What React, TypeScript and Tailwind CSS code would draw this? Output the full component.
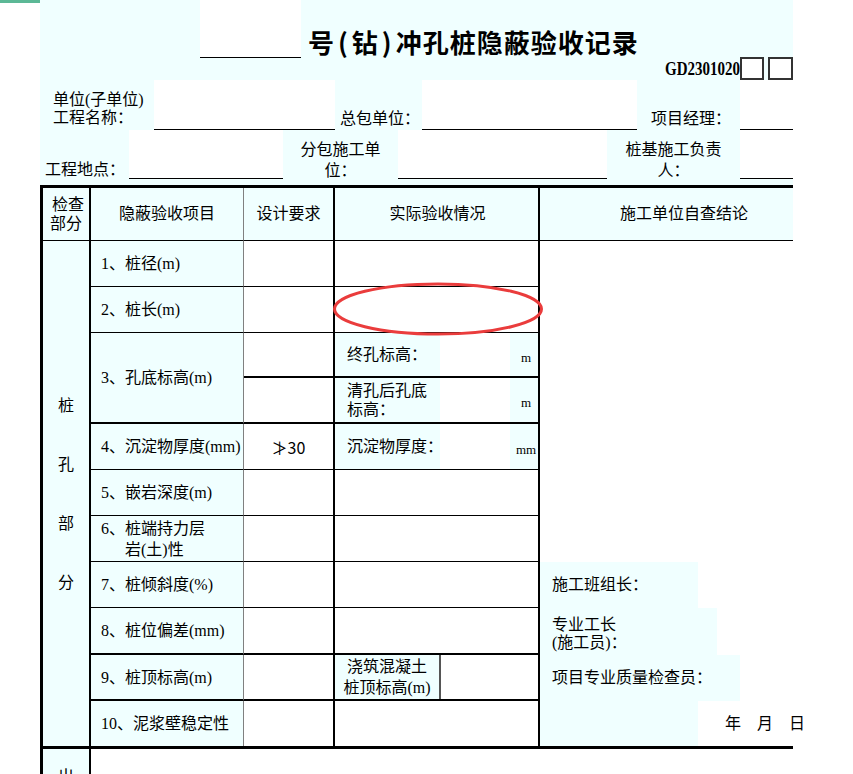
import React from "react";

const CY = "bg-[#f0ffff]";
const LB = "border-b border-b-black";
const LB2 = "border-b-2 border-b-black";
const RA = "border-r-2 border-r-black";
const RB = "border-r border-r-[#808080]";

function BCell({ row, span, bottom, children }: { row: string; span?: string; bottom: string; children: React.ReactNode }) {
  return (
    <div className={`col-start-2 ${row} ${span ?? ""} ${RB} ${bottom} ${CY} flex items-center pl-[10px] leading-[21px] whitespace-nowrap`}>
      {children}
    </div>
  );
}

function Unit({ u, label, lines }: { u: string; label?: string; lines?: string[] }) {
  return (
    <div className="flex h-full">
      <div className={`w-[105px] shrink-0 ${CY} flex flex-col justify-center pl-[12px] leading-[19px] whitespace-nowrap`}>
        {label ? <span>{label}</span> : lines?.map((l) => <span key={l}>{l}</span>)}
      </div>
      <div className="w-[70px] shrink-0 bg-white" />
      <div className={`flex-1 ${CY} flex items-center justify-center pl-[4px] pt-[5px] font-['Liberation_Serif',serif] text-[13px] leading-[13px]`}>
        {u}
      </div>
    </div>
  );
}

export default function App() {
  return (
    <div className="relative w-[853px] h-[774px] overflow-hidden bg-white font-['Liberation_Serif','Noto_Sans_CJK_SC',serif] text-[16px] text-black">
      <div className="flex">
        <div className="w-[40px] shrink-0">
          <div className="h-[3px] w-[40px] bg-[#5cb896]" />
        </div>
        <div className={`w-[753px] shrink-0 flex flex-col ${CY}`}>
          {/* title row */}
          <div className="h-[80px] flex">
            <div className="w-[160px] shrink-0" />
            <div className="w-[101px] h-[58px] shrink-0 bg-white border-b border-b-black" />
            <div className="ml-[7px] mt-[29px] font-['Noto_Sans_CJK_SC',sans-serif] text-[26px] leading-[26px] font-bold tracking-[1px] whitespace-nowrap">
              号<span className="mx-[3px]">(</span>钻<span className="mx-[3px]">)</span>冲孔桩隐蔽验收记录
            </div>
            <div className="flex-1" />
            <div className="self-end flex items-center h-[23px]">
              <span className="inline-block font-['Liberation_Serif',serif] font-bold text-[15px] leading-[15px] scale-y-[1.3] mt-[1px]">
                GD2301020
              </span>
              <div className="w-[24px] h-[23px] border-2 border-[#333] bg-white" />
              <div className="ml-[4px] w-[25px] h-[23px] border-2 border-[#333] bg-white" />
            </div>
          </div>

          {/* info row 1 */}
          <div className="h-[50px] flex">
            <div className="w-[114px] shrink-0 pl-[13px] pt-[11px] leading-[18px] flex flex-col whitespace-nowrap">
              <span>单位(子单位)</span>
              <span>工程名称：</span>
            </div>
            <div className="w-[181px] shrink-0 bg-white border-b border-b-black" />
            <div className="w-[87px] shrink-0 pl-[5px] pt-[29px] leading-[20px] whitespace-nowrap">总包单位：</div>
            <div className="w-[215px] shrink-0 bg-white border-b border-b-black" />
            <div className="w-[103px] shrink-0 pl-[14px] pt-[29px] leading-[20px] whitespace-nowrap">项目经理：</div>
            <div className="w-[53px] shrink-0 bg-white border-b border-b-black" />
          </div>

          {/* info row 2 */}
          <div className="h-[50px] flex items-start">
            <div className="w-[89px] shrink-0 pl-[5px] pt-[30px] leading-[20px] whitespace-nowrap">工程地点：</div>
            <div className="w-[154px] shrink-0 h-[49px] bg-white border-b border-b-black" />
            <div className="w-[115px] shrink-0 pt-[9px] leading-[21px] flex flex-col items-center whitespace-nowrap">
              <span>分包施工单</span>
              <span>位：</span>
            </div>
            <div className="w-[209px] shrink-0 h-[49px] bg-white border-b border-b-black" />
            <div className="w-[133px] shrink-0 pt-[9px] leading-[21px] flex flex-col items-center whitespace-nowrap">
              <span>桩基施工负责</span>
              <span>人：</span>
            </div>
            <div className="w-[53px] shrink-0 h-[49px] bg-white border-b border-b-black" />
          </div>

          {/* table */}
          <div className="mt-[5px] border-l-[3px] border-t-[3px] border-black">
            <div className="grid grid-cols-[48px_153px_91px_205px_253px] grid-rows-[53px_46px_46px_45px_46px_46px_46px_46px_46px_47px_46px_45px] border-b-[3px] border-b-black">
              {/* header */}
              <div className={`col-start-1 row-start-1 ${RA} ${LB} flex flex-col items-center justify-center leading-[19px]`}>
                <span className="pl-[4px]">检查</span>
                <span>部分</span>
              </div>
              <div className={`col-start-2 row-start-1 ${RB} ${LB} flex items-center justify-center`}>隐蔽验收项目</div>
              <div className={`col-start-3 row-start-1 ${RA} ${LB} flex items-center justify-center`}>设计要求</div>
              <div className={`col-start-4 row-start-1 ${RA} ${LB} flex items-center justify-center pl-[2px]`}>实际验收情况</div>
              <div className={`col-start-5 row-start-1 ${LB} flex items-center justify-center pl-[35px] whitespace-nowrap`}>施工单位自查结论</div>

              {/* col A */}
              <div className={`col-start-1 row-start-2 row-span-11 ${RA} flex flex-col items-center justify-center leading-[59px]`}>
                <span>桩</span>
                <span>孔</span>
                <span>部</span>
                <span>分</span>
              </div>

              {/* col B */}
              <BCell row="row-start-2" bottom={LB}>1、桩径(m)</BCell>
              <BCell row="row-start-3" bottom={LB}>2、桩长(m)</BCell>
              <BCell row="row-start-4" span="row-span-2" bottom={LB2}>3、孔底标高(m)</BCell>
              <BCell row="row-start-6" bottom={LB}>4、沉淀物厚度(mm)</BCell>
              <BCell row="row-start-7" bottom={LB}>5、嵌岩深度(m)</BCell>
              <BCell row="row-start-8" bottom={LB}>
                <div className="flex flex-col">
                  <span>6、桩端持力层</span>
                  <span className="pl-[24px]">岩(土)性</span>
                </div>
              </BCell>
              <BCell row="row-start-9" bottom={LB}>7、桩倾斜度(%)</BCell>
              <BCell row="row-start-10" bottom={LB2}>8、桩位偏差(mm)</BCell>
              <BCell row="row-start-11" bottom={LB2}>9、桩顶标高(m)</BCell>
              <BCell row="row-start-12" bottom="">10、泥浆壁稳定性</BCell>

              {/* col C */}
              <div className={`col-start-3 row-start-2 ${RA} ${LB} bg-white`} />
              <div className={`col-start-3 row-start-3 ${RA} ${LB} bg-white`} />
              <div className={`col-start-3 row-start-4 ${RA} ${LB2} bg-white`} />
              <div className={`col-start-3 row-start-5 ${RA} ${LB2} bg-white`} />
              <div className={`col-start-3 row-start-6 ${RA} ${LB} bg-white flex items-center justify-center font-['Noto_Sans_CJK_SC',sans-serif]`}>≯30</div>
              <div className={`col-start-3 row-start-7 ${RA} ${LB} bg-white`} />
              <div className={`col-start-3 row-start-8 ${RA} ${LB} bg-white`} />
              <div className={`col-start-3 row-start-9 ${RA} ${LB} bg-white`} />
              <div className={`col-start-3 row-start-10 ${RA} ${LB2} bg-white`} />
              <div className={`col-start-3 row-start-11 ${RA} ${LB2} bg-white`} />
              <div className={`col-start-3 row-start-12 ${RA} bg-white`} />

              {/* col D */}
              <div className={`col-start-4 row-start-2 ${RA} ${LB} bg-white`} />
              <div className={`col-start-4 row-start-3 ${RA} ${LB} bg-white`} />
              <div className={`col-start-4 row-start-4 ${RA} ${LB2} bg-white`}>
                <Unit u="m" label="终孔标高：" />
              </div>
              <div className={`col-start-4 row-start-5 ${RA} ${LB2} bg-white`}>
                <Unit u="m" lines={["清孔后孔底", "标高："]} />
              </div>
              <div className={`col-start-4 row-start-6 ${RA} ${LB} bg-white`}>
                <Unit u="mm" label="沉淀物厚度：" />
              </div>
              <div className={`col-start-4 row-start-7 ${RA} ${LB} bg-white`} />
              <div className={`col-start-4 row-start-8 ${RA} ${LB} bg-white`} />
              <div className={`col-start-4 row-start-9 ${RA} ${LB} bg-white`} />
              <div className={`col-start-4 row-start-10 ${RA} ${LB2} bg-white`} />
              <div className={`col-start-4 row-start-11 ${RA} ${LB2} bg-white flex`}>
                <div className={`w-[106px] shrink-0 ${CY} border-r-2 border-r-[#555] flex flex-col items-center justify-center leading-[21px] whitespace-nowrap`}>
                  <span>浇筑混凝土</span>
                  <span>桩顶标高(m)</span>
                </div>
              </div>
              <div className={`col-start-4 row-start-12 ${RA} bg-white`} />

              {/* col E */}
              <div className="col-start-5 row-start-2 row-span-11 flex flex-col bg-white">
                <div className="h-[321px] shrink-0" />
                <div className="h-[46px] flex shrink-0">
                  <div className={`w-[158px] shrink-0 ${CY} flex items-center pl-[12px] whitespace-nowrap`}>施工班组长：</div>
                </div>
                <div className="h-[47px] flex shrink-0">
                  <div className={`w-[177px] shrink-0 ${CY} flex flex-col justify-center pl-[12px] pt-[4px] leading-[18px] whitespace-nowrap`}>
                    <span>专业工长</span>
                    <span>(施工员)：</span>
                  </div>
                </div>
                <div className="h-[46px] flex shrink-0">
                  <div className={`w-[200px] shrink-0 ${CY} flex items-center pl-[12px] whitespace-nowrap`}>项目专业质量检查员：</div>
                </div>
                <div className="h-[45px] flex shrink-0">
                  <div className={`w-[158px] shrink-0 ${CY}`} />
                  <div className="shrink-0 pl-[27px] flex items-center whitespace-nowrap">年　月　日</div>
                </div>
              </div>
            </div>

            {/* bottom row */}
            <div className="flex h-[25px] bg-white">
              <div className={`w-[48px] shrink-0 ${RA} ${CY} flex justify-center pt-[18px] leading-[20px] overflow-hidden`}>出</div>
              <div className="flex-1 bg-white" />
            </div>
          </div>
        </div>
      </div>

      <svg className="absolute left-[330px] top-[280px]" width="216" height="60" viewBox="0 0 216 60">
        <ellipse cx="108" cy="29" rx="103.5" ry="25" fill="none" stroke="#ea3c3c" strokeWidth="3" />
      </svg>
    </div>
  );
}
